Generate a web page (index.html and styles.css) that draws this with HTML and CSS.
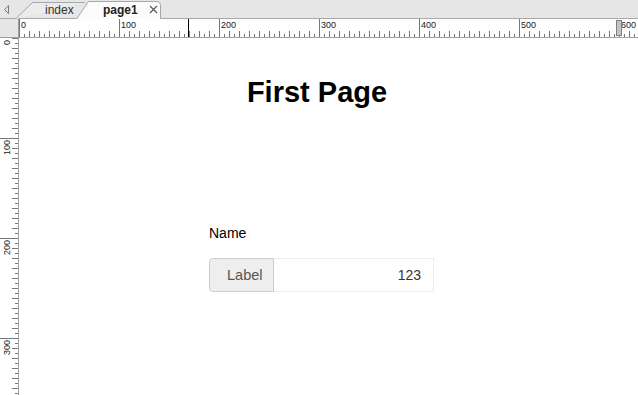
FILE: index.html
```html
<!DOCTYPE html>
<html lang="en">
<head>
  <meta charset="UTF-8" />
  <title>page1</title>
  <link rel="stylesheet" href="styles.css">
</head>
<body>

  <!-- Tab strip -->
  <div class="tabbar">
    <div class="nav-arrow">
      <svg width="15" height="18" viewBox="0 0 15 18">
        <path d="M8.5 5.5 L4.5 9.5 L8.5 13.5 Z" fill="none" stroke="#7a7a7a" stroke-width="1"/>
      </svg>
    </div>
    <div class="tab">
      <svg class="tab-shape" width="70" height="19" viewBox="0 0 70 19">
        <path d="M0.5 19 L17.5 2.5 L70 2.5" fill="#ececec" stroke="#a8a8a8" stroke-width="1"/>
      </svg>
      <span class="tab-label">index</span>
    </div>
    <div class="tab active">
      <svg class="tab-shape" width="85" height="19" viewBox="0 0 85 19">
        <path d="M0.5 19 L12.5 1.5 L81 1.5 Q84.5 1.5 84.5 5 L84.5 19" fill="#fbfbfb" stroke="#a8a8a8" stroke-width="1"/>
      </svg>
      <span class="tab-label">page1</span>
      <svg class="tab-close" width="9" height="9" viewBox="0 0 9 9">
        <path d="M1 1 L8 8 M8 1 L1 8" stroke="#555" stroke-width="1.1"/>
      </svg>
    </div>
  </div>

  <!-- Editor area with rulers -->
  <div class="workspace">
    <div class="corner"></div>

    <svg class="hruler" width="619" height="19" viewBox="0 0 619 19">
      <defs>
        <pattern id="hticks" x="0" y="0" width="10" height="19" patternUnits="userSpaceOnUse">
          <line x1="0.5" y1="12" x2="0.5" y2="18" stroke="#777"/>
          <line x1="5.5" y1="15" x2="5.5" y2="18" stroke="#777"/>
        </pattern>
      </defs>
      <rect x="0" y="0" width="619" height="18" fill="url(#hticks)"/>
      <g stroke="#777">
        <line x1="0.5" y1="0" x2="0.5" y2="18"/>
        <line x1="100.5" y1="0" x2="100.5" y2="18"/>
        <line x1="200.5" y1="0" x2="200.5" y2="18"/>
        <line x1="300.5" y1="0" x2="300.5" y2="18"/>
        <line x1="400.5" y1="0" x2="400.5" y2="18"/>
        <line x1="500.5" y1="0" x2="500.5" y2="18"/>
      </g>
      <g class="ruler-text">
        <text x="2" y="9">0</text>
        <text x="102" y="9">100</text>
        <text x="202" y="9">200</text>
        <text x="302" y="9">300</text>
        <text x="402" y="9">400</text>
        <text x="502" y="9">500</text>
        <text x="602" y="9">600</text>
      </g>
      <line x1="169.5" y1="0" x2="169.5" y2="18" stroke="#000"/>
      <rect x="597.5" y="1.5" width="5" height="15" fill="#c4c4c4" stroke="#808080"/>
      <line x1="0" y1="18.5" x2="619" y2="18.5" stroke="#a0a0a0"/>
    </svg>

    <svg class="vruler" width="19" height="357" viewBox="0 0 19 357">
      <defs>
        <pattern id="vticks" x="0" y="0" width="19" height="10" patternUnits="userSpaceOnUse">
          <line x1="12" y1="0.5" x2="18" y2="0.5" stroke="#777"/>
          <line x1="15" y1="5.5" x2="18" y2="5.5" stroke="#777"/>
        </pattern>
      </defs>
      <rect x="0" y="0" width="18" height="357" fill="url(#vticks)"/>
      <g stroke="#777">
        <line x1="0" y1="100.5" x2="18" y2="100.5"/>
        <line x1="0" y1="200.5" x2="18" y2="200.5"/>
        <line x1="0" y1="300.5" x2="18" y2="300.5"/>
      </g>
      <g class="ruler-text">
        <text x="10" y="2" text-anchor="end" transform="rotate(-90 10 2)">0</text>
        <text x="10" y="102" text-anchor="end" transform="rotate(-90 10 102)">100</text>
        <text x="10" y="202" text-anchor="end" transform="rotate(-90 10 202)">200</text>
        <text x="10" y="302" text-anchor="end" transform="rotate(-90 10 302)">300</text>
      </g>
      <line x1="18.5" y1="0" x2="18.5" y2="357" stroke="#a0a0a0"/>
    </svg>

    <div class="canvas">
      <div class="page">
        <h1 class="page-title">First Page</h1>
        <div class="field">
          <div class="field-label">Name</div>
          <div class="input-group">
            <span class="input-addon">Label</span>
            <input class="input-box" type="text" value="123">
          </div>
        </div>
      </div>
    </div>
  </div>

</body>
</html>
```
FILE: styles.css
```css
* {
  padding: 0;
  margin: 0;
  box-sizing: border-box;
}

body {
  width: 638px;
  height: 395px;
  overflow: hidden;
  background: white;
  font-family: "Liberation Sans", Arial, sans-serif;
}

/* Tab strip */
.tabbar {
  height: 19px;
  display: flex;
  align-items: stretch;
  background: #e6e6e6;
  border-bottom: 1px solid #a8a8a8;
}

.nav-arrow {
  width: 15px;
  display: flex;
  align-items: center;
}

.tab {
  position: relative;
  height: 18px;
  display: flex;
  align-items: center;
  font-size: 12px;
  color: #333;
}

.tab:nth-child(2) {
  width: 70px;
  padding-left: 30px;
}

.tab.active {
  width: 85px;
  margin-left: -9px;
  padding-left: 27px;
  font-weight: bold;
  color: #222;
}

.tab-shape {
  position: absolute;
  left: 0;
  top: 0;
}

.tab-label {
  position: relative;
  padding-top: 1px;
}

.tab-close {
  position: relative;
  margin-left: 11px;
  margin-top: 1px;
}

/* Rulers and canvas */
.workspace {
  display: grid;
  grid-template-columns: 19px 619px;
  grid-template-rows: 19px 357px;
}

.corner {
  background: #e6e6e6;
  border-right: 1px solid #a0a0a0;
  border-bottom: 1px solid #a0a0a0;
}

.hruler,
.vruler {
  display: block;
  background: white;
}

.ruler-text {
  font-family: "Liberation Sans", Arial, sans-serif;
  font-size: 9px;
  fill: #222;
}

.canvas {
  background: white;
  overflow: hidden;
}

.page {
  width: 596px;
  padding-top: 37px;
}

.page-title {
  text-align: center;
  font-size: 29px;
  line-height: 34px;
  font-weight: bold;
  color: #000;
}

.field {
  margin: 114px 0 0 190px;
  width: 225px;
}

.field-label {
  font-size: 14px;
  line-height: 20px;
  color: #000;
}

.input-group {
  display: flex;
  height: 34px;
  margin-top: 15px;
}

.input-addon {
  width: 65px;
  display: flex;
  align-items: center;
  padding-left: 17px;
  font-size: 14.5px;
  color: #555;
  background: #eeeeee;
  border: 1px solid #cccccc;
  border-radius: 4px 0 0 4px;
}

.input-box {
  flex: 1;
  min-width: 0;
  border: 1px solid #ececec;
  border-left: none;
  padding: 0 12px;
  font-family: "Liberation Sans", Arial, sans-serif;
  font-size: 14px;
  color: #333;
  text-align: right;
  background: white;
  outline: none;
}
```
